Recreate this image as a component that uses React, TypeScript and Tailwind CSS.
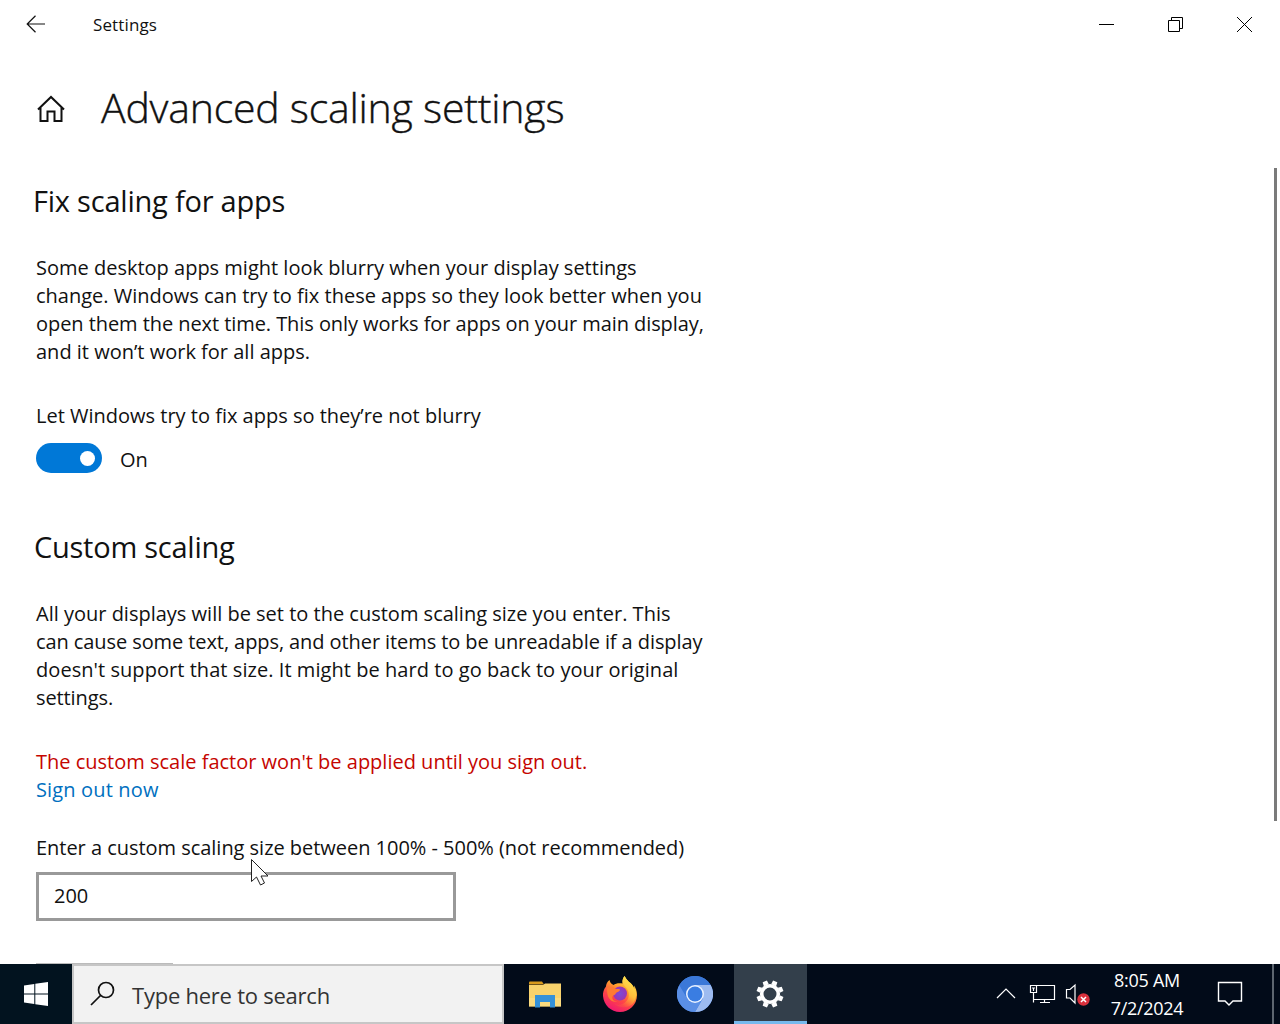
import type { ReactNode } from 'react'

const TitleBar = () => {
   return (
      <header className="flex h-12 items-center">
         <svg className="ml-[26px] h-[18px] w-5" viewBox="0 0 20 18" fill="none" stroke="#111" strokeWidth="1.2">
            <path d="M19 9H1M9.5 .8L1.2 9l8.3 8.2" />
         </svg>
         <span className="ml-[47px] mt-0.5 text-[17px] tracking-[0.12px]">Settings</span>
         <div className="ml-auto flex items-center">
            <svg className="h-12 w-[69px]" viewBox="0 0 69 48" stroke="#000">
               <path d="M27 24.5h15" />
            </svg>
            <svg className="h-12 w-[69px]" viewBox="0 0 69 48" fill="none" stroke="#000">
               <path d="M27.5 20.5h11v11h-11zM30.500 20v-2.500h11v11H39" />
            </svg>
            <svg className="mr-px h-12 w-[69px]" viewBox="0 0 69 48" stroke="#000">
               <path d="M27 17l15 15M42 17L27 32" />
            </svg>
         </div>
      </header>
   )
}

const Line = ({ className = '', children }: { className?: string; children: ReactNode }) => {
   return <span className={`block h-7 whitespace-nowrap ${className}`}>{children}</span>
}

const Content = () => {
   return (
      <main className="flex h-[796px] justify-between">
         <div className="pl-9 text-[20px] leading-7">
            <h2 className="-ml-[3px] mt-[13px] h-[41px] text-[29px] leading-10 tracking-[-0.22px]">Fix scaling for apps</h2>
            <p className="mt-8">
               <Line>Some desktop apps might look blurry when your display settings</Line>
               <Line>change. Windows can try to fix these apps so they look better when you</Line>
               <Line className="tracking-[-0.065px]">open them the next time. This only works for apps on your main display,</Line>
               <Line>and it won’t work for all apps.</Line>
            </p>
            <p className="mt-9">
               <Line>Let Windows try to fix apps so they’re not blurry</Line>
            </p>
            <div className="mt-[13px] flex h-[30px] items-center">
               <button className="flex h-[30px] w-[66px] items-center justify-end rounded-full bg-[#0078d7] pr-[7px]">
                  <span className="size-[15px] rounded-full bg-white"></span>
               </button>
               <span className="ml-[18px] mt-[3px]">On</span>
            </div>
            <h2 className="-ml-0.5 mt-[54px] h-[41px] text-[29px] leading-10 tracking-[-0.25px]">Custom scaling</h2>
            <p className="mt-8">
               <Line>All your displays will be set to the custom scaling size you enter. This</Line>
               <Line className="tracking-[-0.085px]">can cause some text, apps, and other items to be unreadable if a display</Line>
               <Line className="tracking-[0.055px]">doesn't support that size. It might be hard to go back to your original</Line>
               <Line className="tracking-[-0.1px]">settings.</Line>
            </p>
            <p className="mt-9 text-[#c50500]">
               <Line>The custom scale factor won't be applied until you sign out.</Line>
            </p>
            <a className="block text-[#0070c0]">
               <Line className="tracking-[0.15px]">Sign out now</Line>
            </a>
            <p className="mt-[30px]">
               <Line className="tracking-[-0.03px]">Enter a custom scaling size between 100% - 500% (not recommended)</Line>
            </p>
            <div className="mt-2.5 flex h-[49px] w-[420px] items-center border-[3px] border-[#999] pb-0.5 pl-[15px]">200</div>
            <div className="mt-[42px] h-px w-[137px] bg-[#bbb]"></div>
         </div>
         <div className="mr-[3px] h-[653px] w-[3px] bg-[#7a7a7a]"></div>
      </main>
   )
}

const FolderIcon = () => {
   return (
      <svg className="mt-0.5 h-7 w-8" viewBox="0 0 32 28">
         <path d="M0 1.500Q0 .5 1 .5h12l2 3H0z" fill="#d99a1c" />
         <path d="M0 4h14l2-1.500h16V25.500H0z" fill="#f8d26c" />
         <path d="M0 17h32v8.500H0z" fill="#fbe08a" opacity=".6" />
         <path d="M6 14h20v12.500h-5V21H11v5.500H6z" fill="#3591d8" />
      </svg>
   )
}

const FirefoxIcon = () => {
   return (
      <svg className="h-9 w-9" viewBox="0 0 36 36">
         <defs>
            <linearGradient id="fox" x1=".8" y1="0" x2=".3" y2="1">
               <stop offset="0" stopColor="#fff44f" />
               <stop offset=".35" stopColor="#ffa32b" />
               <stop offset=".65" stopColor="#ff4546" />
               <stop offset="1" stopColor="#ef1674" />
            </linearGradient>
            <linearGradient id="tail" x1="1" y1="0" x2=".5" y2="1">
               <stop offset="0" stopColor="#fff157" />
               <stop offset=".6" stopColor="#ffbd3b" />
               <stop offset="1" stopColor="#ff7b36" stopOpacity=".2" />
            </linearGradient>
            <radialGradient id="globe">
               <stop offset="0" stopColor="#7a4bd8" />
               <stop offset="1" stopColor="#9b35b4" />
            </radialGradient>
         </defs>
         <path d="M22.500 0c-2 3-2.500 5-2 7.500-4-.5-7 0-9 1.500C9 8 8 6 7.500 4 5 6 4 8.500 4 10.500 1.500 13.500 .8 17 1 20c.7 9 8 16 17 16s17-7 17-17c0-4-1.500-7.500-3-9.500 0 1 .2 2 .2 3C31 9.500 29 7 27 6c-2-2-3.500-4-4.500-6z" fill="url(#fox)" />
         <path d="M22.500 0c-3 4-2 8 1 11 4 4 4.500 10 1 14-3 4-9 5-13 2 5 5 14 6 19 1 5-6 4.500-13 1.700-15.500C31 9.500 29 7 27 6c-2-2-3.500-4-4.500-6z" fill="url(#tail)" />
         <circle cx="18" cy="17.500" r="7" fill="url(#globe)" />
         <path d="M5 12c3-2.500 7-1 9 1 1.500 0 3.500 0 4 .5 0 2-3 2.500-4 3.500-.5 2-3 2-3.500 3.500-1 3 2 5 5 5-6 1.500-11-3-10.500-13.500z" fill="#ff7a32" />
      </svg>
   )
}

const ChromiumIcon = () => {
   return (
      <svg className="h-9 w-9" viewBox="0 0 36 36">
         <circle cx="18" cy="18" r="18" fill="#3f7de0" />
         <path d="M18 9h15.600A18 18 0 0 1 18 36l7.800-13.500z" fill="#9dbbf0" />
         <path d="M2.400 9A18 18 0 0 0 18 36l7.800-13.500a9 9 0 0 1-15.600 0z" fill="#5a8fe6" />
         <path d="M2.400 9A18 18 0 0 1 33.600 9H18a9 9 0 0 0-7.800 13.500z" fill="#3b78d8" />
         <circle cx="18" cy="18" r="9" fill="#eaf2ff" />
         <circle cx="18" cy="18" r="7.500" fill="#3a7de2" />
      </svg>
   )
}

const teeth = [22.5, 67.5, 112.5, 157.5, 202.5, 247.5, 292.5, 337.5]

const GearIcon = () => {
   return (
      <svg className="mr-0.5 mt-0.5 h-7 w-7" viewBox="-14 -14 28 28">
         <circle r="8.300" fill="none" stroke="#fff" strokeWidth="3.600" />
         {teeth.map((angle) => (
            <path key={angle} d="M-2.700-9.500L-2.300-13.600H2.300L2.700-9.500z" fill="#fff" transform={`rotate(${angle})`} />
         ))}
      </svg>
   )
}

const Tray = () => {
   return (
      <div className="ml-auto flex h-full items-center text-white">
         <svg className="mr-[7px] h-[60px] w-[110px]" viewBox="0 0 110 60" fill="none" stroke="#fff" strokeWidth="1.200">
            <path d="M7 34l9-9 9 9" />
            <path d="M46.500 21.500h18v14h-21M50 38.500h10M54.500 36v2" />
            <path d="M40.500 21.500h6v7h-6zM42 24h3M43.500 24v3M43.500 28.500v10" />
            <path d="M76.500 25.500h3.500l5-4.500v18l-5-5h-3.500z" />
            <circle cx="93.500" cy="35.500" r="6.200" fill="#d9303c" stroke="none" />
            <path d="M91 33l5 5M96 33l-5 5" strokeWidth="1.500" />
         </svg>
         <div className="flex h-full w-[80px] flex-col items-center pt-0.5 text-[18px] leading-7 tracking-[-0.3px]">
            <span>8:05 AM</span>
            <span>7/2/2024</span>
         </div>
         <svg className="ml-[30px] h-[60px] w-[26px]" viewBox="0 0 26 60" fill="none" stroke="#fff" strokeWidth="1.400">
            <path d="M1.500 18.500h23v18.500H16l-4 4-4-4H1.500z" />
         </svg>
         <div className="ml-[29px] h-full w-[8px] border-l-2 border-[#5d6670]"></div>
      </div>
   )
}

const Taskbar = () => {
   return (
      <footer className="flex h-[60px] items-center bg-[#020b19]">
         <div className="flex h-full w-[72px] items-center justify-center bg-[#02131f]">
            <svg className="h-6 w-6" viewBox="0 0 24 24" fill="#fff">
               <path d="M0 3.400L10.300 2v9.500H0zM11.300 1.800L24 0v11.500H11.300zM0 12.500h10.300V22L0 20.600zM11.300 12.500H24V24l-12.700-1.800z" />
            </svg>
         </div>
         <div className="flex h-full w-[432px] items-center border-2 border-[#c6c6c6] bg-[#f2f2f2]">
            <svg className="ml-4 h-[26px] w-[26px]" viewBox="0 0 26 26" fill="none" stroke="#111" strokeWidth="1.700">
               <circle cx="16" cy="9" r="7.500" />
               <path d="M10.500 14.500L1 24" />
            </svg>
            <span className="ml-4 mt-0.5 text-[22px] tracking-[-0.24px] text-[#333]">Type here to search</span>
         </div>
         <div className="flex h-full items-center">
            <div className="ml-[25px] w-[73px]"><FolderIcon /></div>
            <div className="w-[75px]"><FirefoxIcon /></div>
            <div className="w-[57px]"><ChromiumIcon /></div>
            <div className="flex h-full w-[73px] items-center justify-center border-b-3 border-[#76b9ed] bg-[#333f4b]">
               <GearIcon />
            </div>
         </div>
         <Tray />
      </footer>
   )
}

export default function App() {
   return (
      <div className="relative flex h-[1024px] w-[1280px] flex-col overflow-hidden bg-white font-['Open_Sans',sans-serif] text-[#111]">
         <TitleBar />
         <div className="flex h-[120px] items-start">
            <svg className="ml-9 mt-[47px] h-7 w-[30px]" viewBox="0 0 30 28" fill="none" stroke="#111" strokeWidth="2">
               <path d="M2 14.500L15 2l13 12.500M4.500 12.500V26h7v-9.500h7V26h7V12.500" />
            </svg>
            <h1 className="ml-[35px] mt-[31px] text-[41px] leading-14 font-light tracking-[-0.22px] [-webkit-text-stroke:0.4px_#111]">
               Advanced scaling settings
            </h1>
         </div>
         <Content />
         <Taskbar />
         <svg className="absolute left-[250px] top-[858px] h-[30px] w-5" viewBox="0 0 20 30" fill="#fff" stroke="#222">
            <path d="M1.500 1.500v22l5-4.500 4 8 4-2-3.500-7h7z" />
         </svg>
      </div>
   )
}
